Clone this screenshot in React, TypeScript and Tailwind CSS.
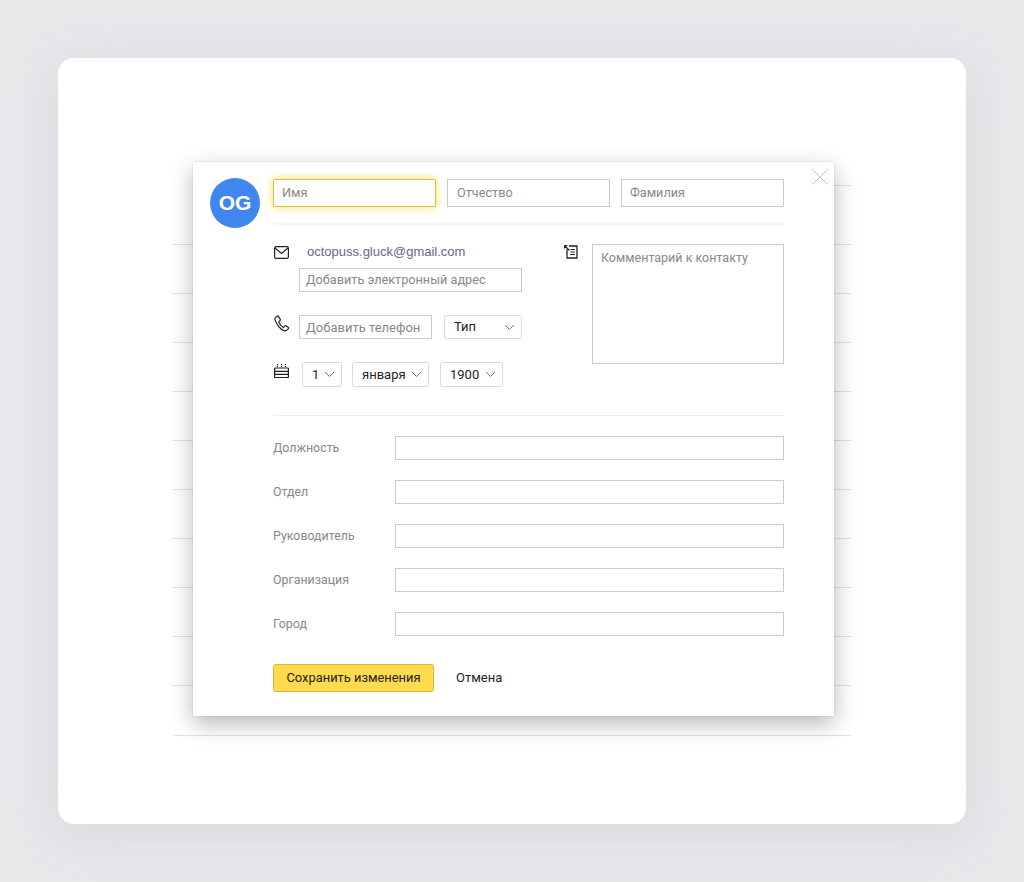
import React from 'react';

const rows = Array.from({ length: 9 });
const fields = ['Должность', 'Отдел', 'Руководитель', 'Организация', 'Город'];

const Chevron = () => (
  <svg width="11" height="7" viewBox="0 0 11 7" fill="none">
    <path d="M1 1l4.5 4.5L10 1" stroke="#777" strokeWidth="1" />
  </svg>
);

const Select = ({ label, className }: { label: string; className: string }) => (
  <div className={`flex items-center justify-between rounded-[2px] border border-[#dcdcdc] bg-white text-[13px] text-[#222] ${className}`}>
    <span>{label}</span>
    <Chevron />
  </div>
);

const inputClass =
  'border border-[#cccccc] bg-white text-[12.7px] outline-none placeholder:text-[#888] text-[#888]';

const App = () => {
  return (
    <div className="relative h-[882px] overflow-hidden bg-[#e6e8ea] p-[58px] font-['Roboto',sans-serif]">
      <div className="relative h-[766px] w-[908px] rounded-[16px] bg-white pl-[115px] pt-[127px] shadow-[0_10px_50px_rgba(150,155,160,0.18)]">
        {/* contact list behind the dialog */}
        <div className="w-[678px]">
          <div className="ml-auto h-[1px] w-[300px] bg-[#e2e2e2]" />
          <div className="h-[59px] border-b border-[#e2e2e2]" />
          {rows.map((_, i) => (
            <div key={i} className="h-[49px] border-b border-[#e2e2e2]" />
          ))}
          <div className="h-[50px] border-b border-[#e2e2e2]" />
        </div>

        {/* dialog */}
        <div className="absolute left-[135px] top-[104px] flex h-[554px] w-[641px] gap-[13px] bg-white pl-[17px] pt-[16px] shadow-[0_8px_22px_rgba(0,0,0,0.28),0_0_2px_rgba(0,0,0,0.12)]">
          <svg width="16" height="16" viewBox="0 0 16 16" fill="none" className="absolute right-[6px] top-[7px]">
            <path d="M.5.5l15 15M15.5.5l-15 15" stroke="#c8c8c8" strokeWidth="1" />
          </svg>

          <div className="flex h-[50px] w-[50px] shrink-0 items-center justify-center rounded-full bg-[#3f87ee] font-['Liberation_Sans',sans-serif] text-[21px] font-bold text-white">
            OG
          </div>

          <div className="w-[511px] pt-[1px]">
            <div className="grid h-[28px] grid-cols-3 gap-[11px]">
              <input placeholder="Имя" className="min-w-0 rounded-[1px] border border-[#e2bc45] bg-white px-[8px] text-[12.7px] outline-none shadow-[0_0_8px_rgba(255,219,77,0.95)] placeholder:text-[#888]" />
              <input placeholder="Отчество" className={`${inputClass} min-w-0 px-[9px]`} />
              <input placeholder="Фамилия" className={`${inputClass} min-w-0 px-[8px]`} />
            </div>

            <div className="mt-[16px] h-[3px] bg-[#f6f6f6]" />

            <div className="mt-[18px] flex h-[172px] justify-between border-b border-[#eeeeee]">
              <div className="w-[249px]">
                <div className="flex h-[15px] items-center">
                  <svg width="15" height="13" viewBox="0 0 15 13" fill="none" className="ml-[1px] mt-[1px]">
                    <rect x=".6" y=".6" width="13.8" height="11.8" rx="1.6" stroke="#222" strokeWidth="1.2" />
                    <path d="M1 2l6.5 5.5L14 2" stroke="#222" strokeWidth="1.2" />
                  </svg>
                  <span className="ml-[18px] font-['Liberation_Sans',sans-serif] text-[13px] leading-[15px] text-[#66668f]">
                    octopuss.gluck@gmail.com
                  </span>
                </div>
                <input placeholder="Добавить электронный адрес" className={`${inputClass} ml-[26px] mt-[9px] block h-[24px] w-[223px] px-[6px] pb-[1px]`} />

                <div className="mt-[23px] flex h-[24px]">
                  <svg width="16" height="17" viewBox="0 0 16 17" fill="none" className="ml-[1px]">
                    <path d="M3.2 1.2L1.4 2.6C.6 3.4 1 6 3.2 9.4c2.5 3.8 6 6.4 8.2 6.4 1 0 1.8-.7 3-2.2.3-.4.2-.8-.1-1.1l-2.3-1.7c-.4-.3-.8-.2-1.1.1l-1 1.2c-.2.2-.5.3-.8.1-1.2-.8-3.6-3.3-4.3-5-.1-.3 0-.6.2-.8l1.1-.9c.3-.3.4-.7.2-1.1L4.5 1.4C4.2.9 3.6.8 3.2 1.2z" stroke="#222" strokeWidth="1.2" strokeLinejoin="round" />
                  </svg>
                  <input placeholder="Добавить телефон" className={`${inputClass} ml-[9px] h-[24px] w-[133px] px-[6px] text-[13px]`} />
                  <Select label="Тип" className="ml-[12px] h-[24px] w-[78px] pl-[9px] pr-[6px]" />
                </div>

                <div className="mt-[23px] flex h-[25px]">
                  <svg width="15" height="16" viewBox="0 0 15 16" fill="none" className="ml-[1px] mt-[1px]">
                    <path d="M3.5 1v3.5M7.5 1v3.5M11.5 1v3.5" stroke="#222" strokeWidth="1.2" strokeDasharray="1.2 .7" />
                    <rect x=".6" y="5" width="13.8" height="9.5" rx=".6" stroke="#222" strokeWidth="1.2" />
                    <path d="M1 8.3h13M1 11.3h13" stroke="#222" strokeWidth="1.2" />
                  </svg>
                  <Select label="1" className="ml-[13px] h-[25px] w-[40px] pl-[9px] pr-[6px]" />
                  <Select label="января" className="ml-[10px] h-[25px] w-[77px] pl-[9px] pr-[6px]" />
                  <Select label="1900" className="ml-[11px] h-[25px] w-[63px] pl-[9px] pr-[6px]" />
                </div>
              </div>

              <div className="flex">
                <svg width="14" height="14" viewBox="0 0 14 14" fill="none" className="mr-[14px] mt-[1px]">
                  <path d="M.5.5l5 5M.5.5h3M.5.5v3" stroke="#222" strokeWidth="1.2" />
                  <path d="M5 1h8v12H3V4" stroke="#222" strokeWidth="1.3" />
                  <path d="M6.500 4.500h4.500M6.500 7h4.500M6 9.500h5" stroke="#222" strokeWidth="1.2" />
                </svg>
                <textarea placeholder="Комментарий к контакту" className="h-[120px] w-[192px] resize-none border border-[#cccccc] bg-white px-[8px] py-[4px] text-[12.5px] outline-none placeholder:text-[#888]" />
              </div>
            </div>

            <div className="mt-[20px] flex flex-col gap-[20px]">
              {fields.map((f) => (
                <div key={f} className="flex h-[24px] items-center">
                  <span className="w-[122px] shrink-0 text-[12.4px] text-[#888]">{f}</span>
                  <input className="h-[24px] w-[389px] border border-[#cccccc] bg-white outline-none" />
                </div>
              ))}
            </div>

            <div className="mt-[28px] flex items-center">
              <button className="h-[28px] w-[161px] rounded-[3px] border border-[#d9b53a] bg-[#ffdb4d] text-[12.9px] text-[#222]">
                Сохранить изменения
              </button>
              <button className="ml-[22px] text-[13px] text-[#222]">Отмена</button>
            </div>
          </div>
        </div>
      </div>
    </div>
  );
};

export default App;
